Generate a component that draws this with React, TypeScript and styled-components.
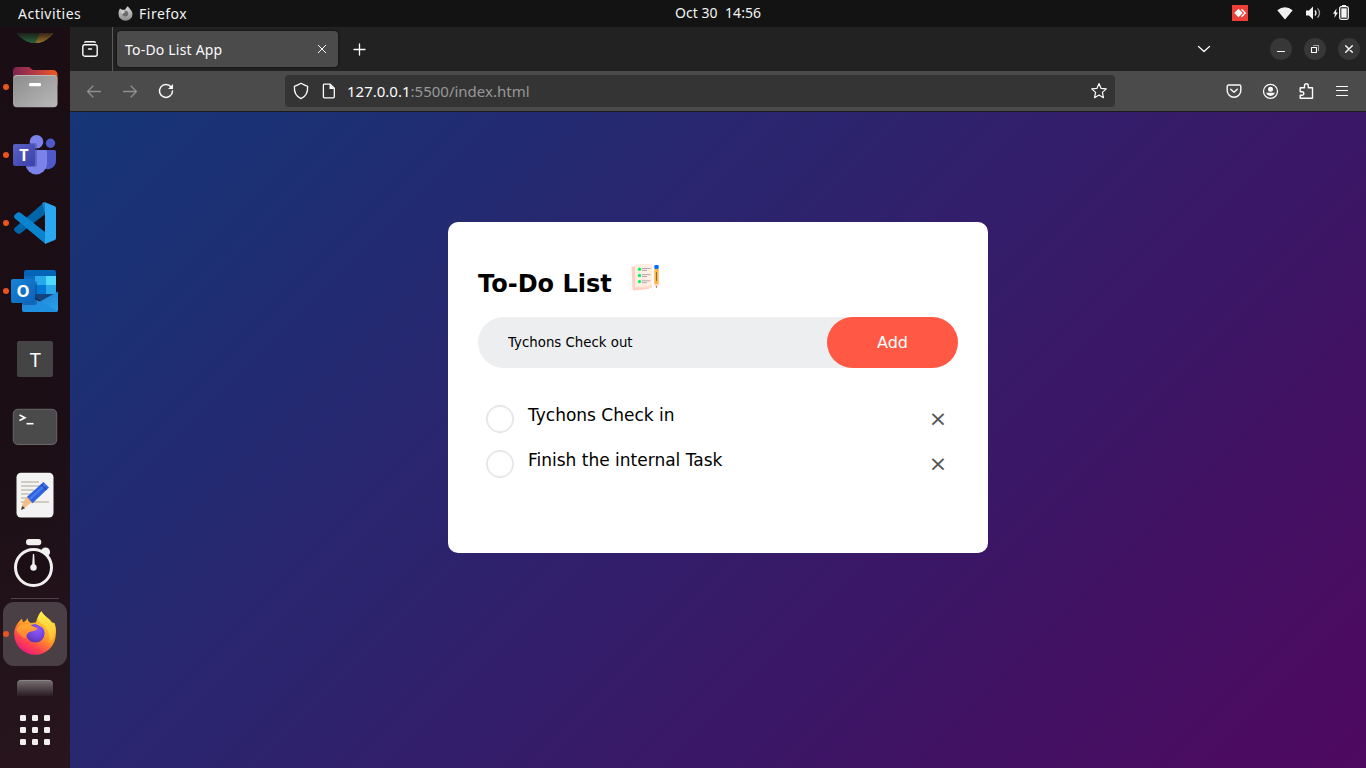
import React from "react";
import styled, { createGlobalStyle, css } from "styled-components";

const GlobalStyle = createGlobalStyle`
  * { box-sizing: border-box; }
  html, body { margin: 0; padding: 0; overflow: hidden; }
  body { font-family: "Noto Sans", "Open Sans", sans-serif; }
  svg { display: block; flex: none; }
  button { font: inherit; border: 0; padding: 0; background: none; color: inherit; }
`;

const Desktop = styled.div`
  width: 1366px;
  height: 768px;
  display: flex;
  flex-direction: column;
  background: #131313;
`;

/* ---------- system bar ---------- */

const SystemBar = styled.header`
  height: 27px;
  flex: none;
  display: grid;
  grid-template-columns: 657px auto 1fr;
  align-items: center;
  padding: 0 16px 0 18px;
  color: #f2f2f2;
  font-size: 14px;
  line-height: 27px;
`;

const BarGroup = styled.div<{ $end?: boolean }>`
  display: flex;
  align-items: center;
  height: 27px;
  ${(p) => p.$end && css`justify-content: flex-end;`}
`;

const BarText = styled.span<{ $spacing?: number; $width?: number }>`
  white-space: pre;
  letter-spacing: ${(p) => p.$spacing ?? 0}px;
  ${(p) => p.$width && css`width: ${p.$width}px;`}
`;

const Clock = styled.time`
  white-space: pre;
  line-height: 25px;
  height: 27px;
  letter-spacing: 0.05px;
`;

const AppMenu = styled.div`
  display: flex;
  align-items: center;
  gap: 6px;
`;

/* ---------- body ---------- */

const Workspace = styled.div`
  flex: 1;
  min-height: 0;
  display: flex;
`;

const Dock = styled.nav`
  width: 70px;
  flex: none;
  display: flex;
  flex-direction: column;
  align-items: center;
  overflow: hidden;
  background: linear-gradient(165deg, #1a0d14 0%, #1b0f15 55%, #28151d 100%);
`;

const DockSlot = styled.div<{ $height?: number; $running?: boolean }>`
  position: relative;
  width: 70px;
  height: ${(p) => p.$height ?? 68}px;
  flex: none;
  ${(p) =>
    p.$running &&
    css`
      &::before {
        content: "";
        position: absolute;
        left: 3px;
        top: calc(50% - 3px);
        width: 6px;
        height: 6px;
        border-radius: 50%;
        background: #e95420;
      }
    `}
`;

const DockDivider = styled.div`
  width: 48px;
  height: 1px;
  margin: 1px 0 3px;
  flex: none;
  background: #4d4347;
`;

const ActiveTile = styled.div`
  width: 64px;
  height: 64px;
  margin: 0 3px;
  border-radius: 11px;
  background: #493f44;
`;

/* ---------- browser ---------- */

const Browser = styled.main`
  flex: 1;
  min-width: 0;
  display: flex;
  flex-direction: column;
`;

const TabStrip = styled.div`
  height: 44px;
  flex: none;
  display: flex;
  align-items: center;
  background: #222222;
  color: #fbfbfe;
`;

const RecentButton = styled.div`
  width: 43px;
  height: 44px;
  display: flex;
  align-items: center;
  padding-left: 12px;
  border-right: 1px solid #5a5a5a;
`;

const Tab = styled.div`
  width: 221px;
  height: 36px;
  margin-left: 4px;
  padding: 0 11px 0 8px;
  display: flex;
  align-items: center;
  justify-content: space-between;
  border-radius: 4px;
  background: #4b4b4b;
  box-shadow: 0 0 3px rgba(0, 0, 0, 0.7);
  font-size: 14px;
`;

const TabTitle = styled.span`
  letter-spacing: 0.2px;
`;

const NewTab = styled.button`
  display: flex;
  margin-left: 15px;
`;

const WindowControls = styled.div`
  margin-left: auto;
  display: flex;
  align-items: center;
  gap: 12px;
  padding-right: 6px;
`;

const TabListButton = styled.div`
  margin-right: 46px;
`;

const WindowButton = styled.div`
  width: 22px;
  height: 22px;
  border-radius: 50%;
  background: #373737;
`;

const NavBar = styled.div`
  height: 41px;
  flex: none;
  display: flex;
  align-items: center;
  background: #4b4b4b;
  border-bottom: 1px solid #1c1c1c;
  color: #fbfbfe;
`;

const NavButtons = styled.div`
  width: 215px;
  padding-left: 14px;
  display: flex;
  gap: 16px;
`;

const AddressBar = styled.div`
  width: 830px;
  height: 32px;
  display: flex;
  align-items: center;
  padding: 0 6px;
  border-radius: 4px;
  background: #343434;
`;

const SiteInfo = styled.div`
  margin-left: 8px;
`;

const Address = styled.div`
  flex: 1;
  margin-left: 8px;
  font-size: 15px;
  color: #989899;

  b {
    font-weight: 400;
    color: #fbfbfe;
  }
`;

const ToolButtons = styled.div`
  margin-left: auto;
  display: flex;
  gap: 16px;
  padding-right: 14px;
`;

/* ---------- page ---------- */

const Page = styled.section`
  flex: 1;
  padding-top: 110px;
  background: linear-gradient(135deg, #153677, #4e085f);
  font-family: "DejaVu Sans", sans-serif;
  color: #000;
`;

const TodoCard = styled.div`
  width: 540px;
  height: 331px;
  margin: 0 auto;
  padding: 40px 30px 70px;
  border-radius: 10px;
  background: #fff;
`;

const Heading = styled.h2`
  display: flex;
  height: 35px;
  margin: 0 0 20px;
  align-items: flex-start;
  font-size: 24px;
  font-weight: 700;
  line-height: 44px;

  svg {
    margin-left: 18px;
  }
`;

const EntryRow = styled.div`
  display: flex;
  height: 51px;
  margin-bottom: 25px;
  padding-left: 20px;
  border-radius: 30px;
  background: #edeef0;
`;

const EntryInput = styled.input`
  flex: 1;
  min-width: 0;
  padding: 10px;
  border: 0;
  outline: 0;
  background: transparent;
  color: #000;
  font-family: inherit;
  font-size: 13.333px;
`;

const AddButton = styled.button`
  width: 131px;
  border-radius: 40px;
  background: #ff5945;
  color: #fff;
  font-size: 16px;
`;

const TaskList = styled.ul`
  margin: 0;
  padding: 0;
  list-style: none;
`;

const Task = styled.li`
  display: flex;
  height: 45px;
  padding: 12px 0 0 8px;
  font-size: 17px;
  line-height: 20px;
`;

const TaskRemove = styled.span`
  width: 40px;
  height: 40px;
  margin: -6px 0 0 auto;
  text-align: center;
  font-size: 22px;
  line-height: 40px;
  color: #555;
`;

const TaskCheck = styled.span`
  width: 28px;
  height: 28px;
  margin-right: 14px;
  border: 1px solid #e0e0e0;
  border-radius: 50%;
  box-shadow: inset 0 0 0 1px #ececec;
`;

/* ---------- icons ---------- */

const Line = ({
  size = 16,
  color = "currentColor",
  width = 1.3,
  children,
}: {
  size?: number;
  color?: string;
  width?: number;
  children: React.ReactNode;
}) => (
  <svg
    width={size}
    height={size}
    viewBox={`0 0 ${size} ${size}`}
    fill="none"
    stroke={color}
    strokeWidth={width}
    strokeLinecap="round"
    strokeLinejoin="round"
  >
    {children}
  </svg>
);

const FirefoxMono = () => (
  <svg width="15" height="15" viewBox="0 0 15 15">
    <defs>
      <linearGradient id="ffm" x1="0" y1="0" x2="0" y2="1">
        <stop offset="0" stopColor="#d8d8d8" />
        <stop offset="1" stopColor="#8a8a8a" />
      </linearGradient>
    </defs>
    <path
      d="M2 2.500 4 3.800 7 3.700C8 2 9 .8 10 .3 10.500 2 14.500 4.500 14.500 8A7 6.800 0 0 1 .5 8C.5 6 1 4 2 2.500Z"
      fill="url(#ffm)"
    />
    <circle cx="7.300" cy="7.600" r="2.900" fill="#6b6b6b" />
    <path d="M2.500 4.500C4.500 4.200 6.500 5 7.500 6 6.500 7 5 7 4.600 8.400" fill="#cfcfcf" />
  </svg>
);

const BrowserPeek = () => (
  <svg width="70" height="26" viewBox="0 0 70 26">
    <defs>
      <clipPath id="peek">
        <rect x="0" y="6" width="70" height="12" />
      </clipPath>
      <clipPath id="peekDisc">
        <circle cx="35" cy="-5" r="21" />
      </clipPath>
      <linearGradient id="peekFade" x1="0" y1="6" x2="0" y2="16" gradientUnits="userSpaceOnUse">
        <stop offset="0" stopColor="#1a0d14" stopOpacity=".85" />
        <stop offset="1" stopColor="#1a0d14" stopOpacity=".3" />
      </linearGradient>
    </defs>
    <g clipPath="url(#peek)">
      <g clipPath="url(#peekDisc)">
        <rect x="12" y="0" width="46" height="18" fill="#2f8a4b" />
        <path d="M35 17 41 4H58V17Z" fill="#d39a2c" />
        <rect x="12" y="0" width="46" height="18" fill="url(#peekFade)" />
      </g>
    </g>
  </svg>
);

const FilesIcon = () => (
  <svg width="70" height="68" viewBox="0 0 70 68">
    <defs>
      <linearGradient id="fBack" x1="0" y1="0" x2="1" y2="0">
        <stop offset="0" stopColor="#7a2450" />
        <stop offset=".5" stopColor="#b63a45" />
        <stop offset="1" stopColor="#f0591f" />
      </linearGradient>
      <linearGradient id="fFront" x1="0" y1="0" x2="1" y2="1">
        <stop offset="0" stopColor="#8c8c8c" />
        <stop offset="1" stopColor="#b9b9b9" />
      </linearGradient>
    </defs>
    <path d="M13 18a4 4 0 0 1 4-4H28.500c2 0 3 3 5 3H53a4.500 4.500 0 0 1 4.500 4.500V32H13Z" fill="url(#fBack)" />
    <rect x="13" y="22" width="44.500" height="32.300" rx="4" fill="url(#fFront)" />
    <path d="M14 24.500C14.500 23 15.500 22.500 17 22.500H53.500C55 22.500 56 23 56.500 24.500" fill="none" stroke="#c4c4c4" strokeWidth=".8" />
    <rect x="29" y="30" width="12" height="3.200" rx="1.200" fill="#fff" />
  </svg>
);

const TeamsIcon = () => (
  <svg width="70" height="68" viewBox="0 0 70 68">
    <defs>
      <linearGradient id="tSq" x1="0" y1="0" x2="1" y2="1">
        <stop offset="0" stopColor="#5a62c3" />
        <stop offset="1" stopColor="#3940ab" />
      </linearGradient>
    </defs>
    <circle cx="50.500" cy="22.300" r="4.700" fill="#5059c9" />
    <path d="M45 29H54.500A1.500 1.500 0 0 1 56 30.500V39.500A8.500 8.500 0 0 1 44 47.500Z" fill="#5059c9" />
    <circle cx="36.500" cy="20.700" r="6.800" fill="#7b83eb" />
    <path d="M27 29H45.500A1.500 1.500 0 0 1 47 30.500V43.500A10.800 11 0 0 1 25.500 43.500V30.500A1.500 1.500 0 0 1 27 29Z" fill="#7b83eb" />
    <path d="M29 22H35A2 2 0 0 1 37 24V43.500A2 2 0 0 1 35 46H26L25.500 29Z" fill="#3f4494" opacity=".45" />
    <rect x="13" y="23" width="22" height="22" rx="2" fill="url(#tSq)" />
    <text x="24" y="40" textAnchor="middle" fontFamily="Open Sans" fontWeight="700" fontSize="16" fill="#fff">T</text>
  </svg>
);

const CodeIcon = () => (
  <svg width="70" height="68" viewBox="0 0 70 68">
    <path d="M15 38.500 44.500 13V25.500L20.500 44.300Q18.800 45.500 17.300 44.300L14.500 42Q13 40.200 15 38.500Z" fill="#0065a9" />
    <path d="M15 29.500Q13 27.800 14.500 26L17.300 23.700Q18.800 22.600 20.500 23.800L45.500 43.500V55Z" fill="#0a84cf" />
    <path d="M45 13.200 54.800 17.200Q56 17.900 56 19.300V48.900Q56 50.300 54.800 51L45 54.900Z" fill="#2aa8f2" />
    <path d="M45 13.200Q43.500 12.700 42 14.600L45 25Z" fill="#1b7fc0" />
  </svg>
);

const OutlookIcon = () => (
  <svg width="70" height="68" viewBox="0 0 70 68">
    <defs>
      <linearGradient id="oEnv" x1="0" y1="0" x2="1" y2="1">
        <stop offset="0" stopColor="#1a78d0" />
        <stop offset="1" stopColor="#2ba3ea" />
      </linearGradient>
      <linearGradient id="oSq" x1="0" y1="0" x2="1" y2="1">
        <stop offset="0" stopColor="#1784d9" />
        <stop offset="1" stopColor="#0c62b8" />
      </linearGradient>
    </defs>
    <path d="M24 15A2 2 0 0 1 26 13H54A2 2 0 0 1 56 15V40H24Z" fill="#0364b8" />
    <rect x="24" y="19" width="11" height="9" fill="#0f6cbd" />
    <rect x="35" y="19" width="11" height="9" fill="#28a8ea" />
    <rect x="46" y="19" width="10" height="9" fill="#50d9ff" />
    <rect x="35" y="28" width="11" height="9" fill="#0078d4" />
    <rect x="46" y="28" width="10" height="9" fill="#28a8ea" />
    <path d="M35 37H56V40L45 46 35 41Z" fill="#14447d" />
    <path d="M22 36 40 44.500 58 34.500V53A2 2 0 0 1 56 55H24A2 2 0 0 1 22 53Z" fill="url(#oEnv)" />
    <path d="M40 44.500 57.500 54Q57 55 56 55H24L22.500 54Z" fill="#1f8fe0" />
    <rect x="22" y="24" width="15" height="24" rx="2" fill="#0a3f7d" opacity=".45" />
    <rect x="11" y="22" width="24" height="24" rx="2" fill="url(#oSq)" />
    <text x="23" y="40" textAnchor="middle" fontFamily="Open Sans" fontWeight="700" fontSize="16.500" fill="#fff">O</text>
  </svg>
);

const LetterIcon = () => (
  <svg width="70" height="68" viewBox="0 0 70 68">
    <rect x="17" y="16" width="36" height="36" rx="2" fill="#444444" />
    <text x="35.300" y="42" textAnchor="middle" fontFamily="Noto Sans" fontSize="20" fill="#fff">T</text>
  </svg>
);

const TerminalIcon = () => (
  <svg width="70" height="68" viewBox="0 0 70 68">
    <rect x="13.300" y="16.300" width="43.400" height="35.200" rx="4.500" fill="#4a4a4a" stroke="#686868" strokeWidth="1" />
    <path d="M19.500 22 25 24.700 19.500 27.500" fill="none" stroke="#fff" strokeWidth="1.600" />
    <path d="M26.500 30.700H33.500" stroke="#fff" strokeWidth="1.600" />
  </svg>
);

const EditorIcon = () => (
  <svg width="70" height="68" viewBox="0 0 70 68">
    <rect x="16.500" y="11.800" width="37" height="44.800" rx="4.500" fill="#f3f3f3" />
    <path d="M21 21H39M21 25H43M21 29H34M21 33H38M21 37H30M21 41H49" stroke="#c3c1b4" strokeWidth="1.700" />
    <path d="M23.500 40.500 27.500 35 32.500 40.500 22.500 48.500 21 48Z" fill="#f5bd86" />
    <path d="M22.300 44.800 25 47.300 21 49Z" fill="#4a4038" />
    <path d="M27 35.800 43.500 21 49 26.500 32.500 42.200Z" fill="#2f62de" />
    <path d="M29.500 38.500 45.500 23.500" stroke="#4a7cf0" strokeWidth="1.800" />
    <path d="M41 23.300 46.500 28.800" stroke="#1c47b4" strokeWidth="1.200" />
  </svg>
);

const StopwatchIcon = () => (
  <svg width="70" height="69" viewBox="0 0 70 69">
    <rect x="26" y="10" width="15.300" height="6.200" rx="3" fill="#f2f0ef" />
    <circle cx="45.500" cy="23" r="4.600" fill="#f2f0ef" />
    <circle cx="33.500" cy="38.500" r="18" fill="#1b0f15" stroke="#f2f0ef" strokeWidth="3" />
    <path d="M32.900 25H34.100L35 38.500H32Z" fill="#f2f0ef" />
    <circle cx="33.500" cy="38.500" r="3.200" fill="#f2f0ef" />
  </svg>
);

const FirefoxIcon = () => (
  <svg width="64" height="64" viewBox="0 0 64 64">
    <defs>
      <linearGradient id="ffBody" x1=".85" y1="0" x2=".25" y2="1">
        <stop offset="0" stopColor="#fff44f" />
        <stop offset=".3" stopColor="#ffc22e" />
        <stop offset=".55" stopColor="#ff8a2a" />
        <stop offset=".78" stopColor="#ff3f50" />
        <stop offset="1" stopColor="#e31587" />
      </linearGradient>
      <radialGradient id="ffGlobe" cx=".6" cy=".3" r=".8">
        <stop offset="0" stopColor="#9059ff" />
        <stop offset=".6" stopColor="#6f43d8" />
        <stop offset="1" stopColor="#5a2ca0" />
      </radialGradient>
      <linearGradient id="ffTail" x1="0" y1="0" x2="0" y2="1">
        <stop offset="0" stopColor="#fff04c" />
        <stop offset="1" stopColor="#ffb62f" />
      </linearGradient>
      <linearGradient id="ffHead" x1="0" y1="0" x2="0" y2="1">
        <stop offset="0" stopColor="#ffab2e" />
        <stop offset="1" stopColor="#ff7a35" />
      </linearGradient>
    </defs>
    <path
      d="M19 16.500C19.300 18.500 19.800 19.500 20.500 20.300L23 18.500 24.500 16C24.700 18.500 25.500 20 28 21L33 20.500C34 15.500 36 12 38.500 9.300 40.500 14 46 16 49 20.500L51.500 21C53 25 53.300 28.500 52.800 32A20.800 20.800 0 0 1 11.200 32C11.200 26 14 21 19 16.500Z"
      fill="url(#ffBody)"
    />
    <path d="M38.500 9.300C40.500 14.500 47 16 49 21.500 53 28 51.500 36 46.500 41 47.500 33 45 26 39 22 34.500 19.500 34 13.500 38.500 9.300Z" fill="url(#ffTail)" />
    <circle cx="32.300" cy="31.300" r="9.300" fill="url(#ffGlobe)" />
    <path d="M31 21C38 19.500 44.500 25 44 32 42.500 27.500 40.500 25.500 37.500 24.500Z" fill="#ffb72d" />
    <path d="M13.500 27C17 21.500 23 21.500 27 23 30 24.500 33 25.500 34.500 26.500 33 29.500 27.500 28.800 25 31 23.500 32.500 23 34.500 23.500 36.500 18 35.500 14.500 31.500 13.500 27Z" fill="url(#ffHead)" />
  </svg>
);

const HiddenAppPeek = () => (
  <svg width="70" height="48" viewBox="0 0 70 48">
    <defs>
      <linearGradient id="hid" x1="0" y1="0" x2="0" y2="1">
        <stop offset="0" stopColor="#777174" />
        <stop offset="1" stopColor="#2b1c22" />
      </linearGradient>
    </defs>
    <path d="M17 30V18A4 4 0 0 1 21 14H49A4 4 0 0 1 53 18V30Z" fill="url(#hid)" />
    <path d="M18.500 15.800Q19.500 14.400 21.500 14.400H48.500Q50.500 14.400 51.500 15.800" fill="none" stroke="#948f91" strokeWidth=".8" />
  </svg>
);

const GridIcon = () => (
  <svg width="70" height="54" viewBox="0 0 70 54">
    {[0, 1, 2].map((r) =>
      [0, 1, 2].map((c) => (
        <rect key={`${r}${c}`} x={20 + c * 12} y={1 + r * 12} width="6" height="6" rx="1.300" fill="#f2f0ef" />
      ))
    )}
  </svg>
);

const NotebookIcon = () => (
  <svg width="30" height="30" viewBox="0 0 30 30">
    <path d="M1.500 4.500 5 4V26L19 25.500V27L4 28.500A1.500 1.500 0 0 1 2.500 27Z" fill="#ffd0c2" />
    <rect x="5" y="2" width="17" height="24" rx="1.500" fill="#ffefe2" />
    <path d="M5 24Q12 26 22 23V24.500A1.500 1.500 0 0 1 20.500 26H6.500A1.500 1.500 0 0 1 5 24.500Z" fill="#ffdccd" />
    {[7.3, 13.5, 19.6].map((y) => (
      <g key={y}>
        <circle cx="9.500" cy={y} r="1.700" fill="#0df060" />
        <path d={`M12 ${y - 0.8}H20.500M12 ${y + 1.1}H17`} stroke="#b9a3b0" strokeWidth="1" />
      </g>
    ))}
    <rect x="24.300" y="3" width="4.400" height="4" rx="1" fill="#0a6cf5" />
    <path d="M24.300 7H28.700V22L26.500 26 24.300 22Z" fill="#ffb545" />
    <path d="M26.500 10V19" stroke="#8a6a3e" strokeWidth="1" />
    <path d="M24.500 22H28.500L26.500 26Z" fill="#ffd3d5" />
    <path d="M25.900 24.600H27.100L26.500 26Z" fill="#222" />
  </svg>
);

const StatusIcons = () => (
  <svg width="118" height="27" viewBox="0 0 118 27">
    <rect x="0" y="5" width="16" height="16" fill="#ef3e36" />
    <path d="M6.500 8.800 10.700 13 6.500 17.200 2.300 13Z" fill="#fff" />
    <path d="M9.500 9.300 13.200 13 9.500 16.700" fill="none" stroke="#fff" strokeWidth="1.500" />
    <path d="M45.300 10.200Q53 4.500 60.700 10.200L53.500 19Q53 19.500 52.500 19Z" fill="#f2f2f2" />
    <path d="M74 10.500H77L81 6.500V19.500L77 15.500H74Z" fill="#f2f2f2" />
    <path d="M83 10.500Q85 13 83 15.500" fill="none" stroke="#f2f2f2" strokeWidth="1.300" />
    <path d="M85.500 8.300Q89.500 13 85.500 17.700" fill="none" stroke="#9a9a9a" strokeWidth="1.300" />
    <path d="M104.500 8.500 101 13.800H103L102.300 18 106 12.500H104Z" fill="#f2f2f2" />
    <rect x="107.700" y="6.700" width="8.600" height="12.600" rx="1.500" fill="none" stroke="#f2f2f2" strokeWidth="1.300" />
    <rect x="110" y="5" width="4" height="2" fill="#f2f2f2" />
    <rect x="109.300" y="8.300" width="5.400" height="9.400" fill="#f2f2f2" />
  </svg>
);

const tasks = ["Tychons Check in", "Finish the internal Task"];

export default function App() {
  return (
    <Desktop>
      <GlobalStyle />
      <SystemBar>
        <BarGroup>
          <BarText $width={100} $spacing={0.5}>Activities</BarText>
          <AppMenu>
            <FirefoxMono />
            <BarText $spacing={0.5}>Firefox</BarText>
          </AppMenu>
        </BarGroup>
        <Clock>Oct 30  14:56</Clock>
        <BarGroup $end>
          <StatusIcons />
        </BarGroup>
      </SystemBar>

      <Workspace>
        <Dock>
          <DockSlot $height={26}><BrowserPeek /></DockSlot>
          <DockSlot $running><FilesIcon /></DockSlot>
          <DockSlot $running><TeamsIcon /></DockSlot>
          <DockSlot $running><CodeIcon /></DockSlot>
          <DockSlot $running><OutlookIcon /></DockSlot>
          <DockSlot><LetterIcon /></DockSlot>
          <DockSlot><TerminalIcon /></DockSlot>
          <DockSlot><EditorIcon /></DockSlot>
          <DockSlot><StopwatchIcon /></DockSlot>
          <DockDivider />
          <DockSlot $height={64} $running>
            <ActiveTile><FirefoxIcon /></ActiveTile>
          </DockSlot>
          <DockSlot $height={48}><HiddenAppPeek /></DockSlot>
          <DockSlot $height={54}><GridIcon /></DockSlot>
        </Dock>

        <Browser>
          <TabStrip>
            <RecentButton>
              <Line width={1.4}>
                <path d="M2.800 1.200Q3.200.7 4 .7H12Q12.800.7 13.200 1.200" />
                <rect x=".8" y="3.700" width="14.400" height="11.500" rx="2" />
                <path d="M6.500 8H9.500" />
              </Line>
            </RecentButton>
            <Tab>
              <TabTitle>To-Do List App</TabTitle>
              <Line size={10} width={1}><path d="M1.200 1.200 8.800 8.800M8.800 1.200 1.200 8.800" /></Line>
            </Tab>
            <NewTab>
              <Line size={14} width={1.3}><path d="M6.500 2V13M1 7.500H12" /></Line>
            </NewTab>
            <WindowControls>
              <TabListButton>
                <Line width={1.3}><path d="M2.500 5.500 8 10.500 13.500 5.500" /></Line>
              </TabListButton>
              <WindowButton>
                <Line size={22} width={1.2}><path d="M7.500 13.500H14.500" /></Line>
              </WindowButton>
              <WindowButton>
                <Line size={22} width={1.1}>
                  <rect x="7.500" y="9.500" width="5" height="5" />
                  <path d="M9.500 7.500H14.500V12.500" stroke="#a0a0a0" />
                </Line>
              </WindowButton>
              <WindowButton>
                <Line size={22} width={1.4}><path d="M7.700 7.700 14.300 14.300M14.300 7.700 7.700 14.300" /></Line>
              </WindowButton>
            </WindowControls>
          </TabStrip>

          <NavBar>
            <NavButtons>
              <Line size={20} color="#8f8f90">
                <path d="M3.500 10.500H16.500M9 5 3.500 10.500 9 16" />
              </Line>
              <Line size={20} color="#8f8f90">
                <path d="M3.500 10.500H16.500M11 5 16.500 10.500 11 16" />
              </Line>
              <Line size={20} width={1.5}>
                <path d="M15.200 6A6.500 6.500 0 1 0 16.500 10" />
                <path d="M17 3V8H12Z" fill="currentColor" stroke="none" />
              </Line>
            </NavButtons>
            <AddressBar>
              <Line size={20}>
                <path d="M10 2.300Q13 4 16.600 5.300C17 11 15 15.500 10 17.600 5 15.500 3 11 3.400 5.300Q7 4 10 2.300Z" />
              </Line>
              <SiteInfo>
                <Line size={20}>
                  <path d="M5.200 3.200H11.200L15.300 7.200V15.800Q15.300 16.800 14.300 16.800H5.200Q4.400 16.800 4.400 16V4Q4.400 3.200 5.200 3.200Z" />
                  <path d="M10.500 3.200V7.900H15.300Z" fill="currentColor" stroke="none" />
                </Line>
              </SiteInfo>
              <Address><b>127.0.0.1</b>:5500/index.html</Address>
              <Line size={20} width={1.2}>
                <path d="M10 2.600 12.100 7.400 17.300 7.900 13.400 11.400 14.500 16.700 10 14 5.500 16.700 6.600 11.400 2.700 7.900 7.900 7.400Z" />
              </Line>
            </AddressBar>
            <ToolButtons>
              <Line size={20} width={1.4}>
                <path d="M4.500 4H15.500A1.300 1.300 0 0 1 16.800 5.300V9.500A6.800 6.800 0 0 1 3.200 9.500V5.300A1.300 1.300 0 0 1 4.500 4Z" />
                <path d="M6.700 8.200 10 11.300 13.300 8.200" />
              </Line>
              <Line size={20} width={1.3}>
                <circle cx="10.500" cy="10.300" r="7" />
                <circle cx="10.500" cy="8.300" r="2.500" fill="currentColor" stroke="none" />
                <path d="M6.200 11.800H14.800Q14 14.800 10.500 14.900 7 14.800 6.200 11.800Z" fill="currentColor" stroke="none" />
              </Line>
              <Line size={20} width={1.4}>
                <path d="M4.200 6.700H8.500V4.700A1.900 1.900 0 0 1 12.300 4.700V6.700H16.500V17.300H4.200V14.300H6A1.700 1.700 0 0 0 6 10.700H4.200Z" />
              </Line>
              <Line size={20} width={1.2}>
                <path d="M4.500 5.500H15.500M4.500 9.500H15.500M4.500 14.500H15.500" />
              </Line>
            </ToolButtons>
          </NavBar>

          <Page>
            <TodoCard>
              <Heading>
                To-Do List <NotebookIcon />
              </Heading>
              <EntryRow>
                <EntryInput defaultValue="Tychons Check out" />
                <AddButton>Add</AddButton>
              </EntryRow>
              <TaskList>
                {tasks.map((t) => (
                  <Task key={t}>
                    <TaskCheck />
                    {t}
                    <TaskRemove>×</TaskRemove>
                  </Task>
                ))}
              </TaskList>
            </TodoCard>
          </Page>
        </Browser>
      </Workspace>
    </Desktop>
  );
}
